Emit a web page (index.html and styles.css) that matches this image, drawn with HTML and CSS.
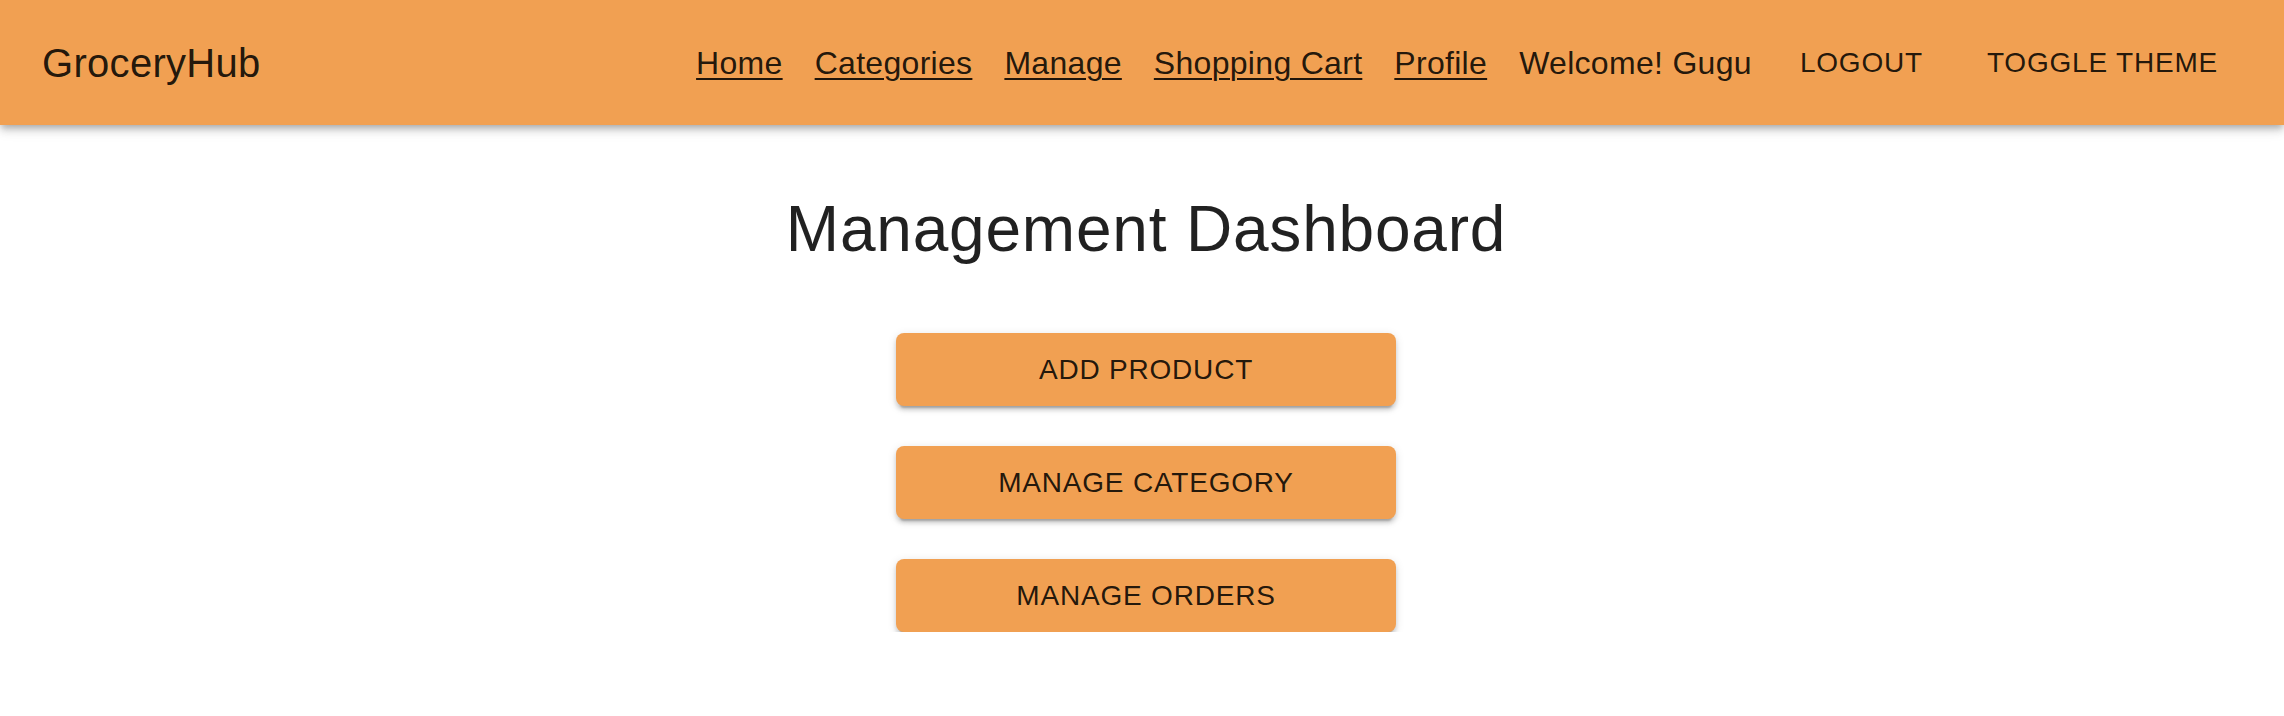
FILE: index.html
```html
<!DOCTYPE html>
<html lang="en">
<head>
<meta charset="utf-8">
<title>GroceryHub</title>
<link rel="stylesheet" href="styles.css">
</head>
<body>
<header class="appbar">
  <div class="toolbar">
    <div class="logo">GroceryHub</div>
    <nav class="nav">
      <a class="nav-link" href="#">Home</a>
      <a class="nav-link" href="#">Categories</a>
      <a class="nav-link" href="#">Manage</a>
      <a class="nav-link" href="#">Shopping Cart</a>
      <a class="nav-link" href="#">Profile</a>
      <span class="welcome">Welcome! Gugu</span>
      <button class="text-btn" type="button">Logout</button>
      <button class="text-btn" type="button">Toggle Theme</button>
    </nav>
  </div>
</header>
<main class="dashboard">
  <h1 class="title">Management Dashboard</h1>
  <div class="actions">
    <button class="action-btn" type="button">Add Product</button>
    <button class="action-btn" type="button">Manage Category</button>
    <button class="action-btn" type="button">Manage Orders</button>
  </div>
</main>
</body>
</html>
```
FILE: styles.css
```css
* { box-sizing: border-box; }

html, body {
  margin: 0;
  padding: 0;
  background: #ffffff;
  font-family: "Liberation Sans", Arial, Helvetica, sans-serif;
  color: rgba(0, 0, 0, 0.87);
}

.appbar {
  background: #f1a052;
  box-shadow: 0 4px 6px -2px rgba(0,0,0,0.2), 0 6px 8px 0 rgba(0,0,0,0.12), 0 2px 16px 0 rgba(0,0,0,0.1);
  position: relative;
  z-index: 1;
}

.toolbar {
  height: 125px;
  display: flex;
  align-items: center;
  padding: 0 50px 0 42px;
}

.logo {
  flex: 1;
  font-size: 40px;
  letter-spacing: 0.3px;
  line-height: 1.6;
  color: rgba(0, 0, 0, 0.87);
}

.nav {
  display: flex;
  align-items: center;
  gap: 32px;
}

.nav-link {
  font-size: 32px;
  letter-spacing: 0.3px;
  color: rgba(0, 0, 0, 0.87);
  text-decoration: underline;
  text-decoration-thickness: 2px;
  text-underline-offset: 4px;
  line-height: 1.5;
}

.welcome {
  font-size: 32px;
  letter-spacing: 0.3px;
  line-height: 1.5;
}

.text-btn {
  font-family: inherit;
  font-size: 28px;
  letter-spacing: 0.8px;
  text-transform: uppercase;
  line-height: 1.75;
  padding: 12px 16px;
  border: 0;
  border-radius: 8px;
  background: transparent;
  color: rgba(0, 0, 0, 0.87);
  cursor: pointer;
}

.dashboard {
  display: flex;
  flex-direction: column;
  align-items: center;
  padding: 65px 0 0 8px;
}

.title {
  margin: 0 0 64px;
  font-size: 64px;
  font-weight: 400;
  letter-spacing: 0.8px;
  line-height: 1.235;
  color: rgba(0, 0, 0, 0.87);
}

.actions {
  display: flex;
  flex-direction: column;
  gap: 40px;
  width: 500px;
}

.action-btn {
  font-family: inherit;
  font-size: 28px;
  letter-spacing: 0.8px;
  text-transform: uppercase;
  line-height: 1.75;
  padding: 12px 32px;
  border: 0;
  border-radius: 8px;
  background: #f1a052;
  color: rgba(0, 0, 0, 0.87);
  box-shadow: 0 6px 2px -4px rgba(0,0,0,0.2), 0 4px 4px 0 rgba(0,0,0,0.14), 0 2px 10px 0 rgba(0,0,0,0.12);
  cursor: pointer;
}
```
